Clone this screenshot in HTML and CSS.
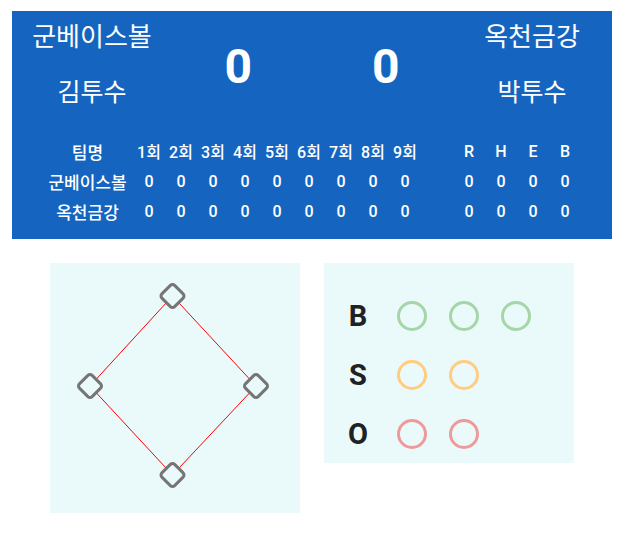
FILE: index.html
```html
<!DOCTYPE html>
<html>
<head>
  <title>Scoreboard</title>
  <link rel="stylesheet" href="styles.css">
</head>
<body>

  <!-- Scoreboard -->
  <div class="board">
    <div class="top">
      <div class="team">
        <div class="team-name">군베이스볼</div>
        <div class="pitcher">김투수</div>
      </div>
      <div class="scores">
        <span>0</span>
        <span>0</span>
      </div>
      <div class="team">
        <div class="team-name">옥천금강</div>
        <div class="pitcher">박투수</div>
      </div>
    </div>

    <table class="linescore">
      <tr class="head">
        <td class="tname">팀명</td>
        <td>1회</td><td>2회</td><td>3회</td><td>4회</td><td>5회</td><td>6회</td><td>7회</td><td>8회</td><td>9회</td>
        <td></td>
        <td>R</td><td>H</td><td>E</td><td>B</td>
      </tr>
      <tr>
        <td class="tname">군베이스볼</td>
        <td>0</td><td>0</td><td>0</td><td>0</td><td>0</td><td>0</td><td>0</td><td>0</td><td>0</td>
        <td></td>
        <td>0</td><td>0</td><td>0</td><td>0</td>
      </tr>
      <tr>
        <td class="tname">옥천금강</td>
        <td>0</td><td>0</td><td>0</td><td>0</td><td>0</td><td>0</td><td>0</td><td>0</td><td>0</td>
        <td></td>
        <td>0</td><td>0</td><td>0</td><td>0</td>
      </tr>
    </table>
  </div>

  <!-- Field + count -->
  <div class="field">
    <div class="panel diamond">
      <svg width="250" height="250" viewBox="0 0 250 250">
        <polygon points="122.5,33 206,123 122.5,212 40,123" fill="none" stroke="#ff0000" stroke-width="1"/>
        <rect class="base" x="113.5" y="24" width="18" height="18" rx="3" transform="rotate(45 122.5 33)"/>
        <rect class="base" x="31" y="114" width="18" height="18" rx="3" transform="rotate(45 40 123)"/>
        <rect class="base" x="197" y="114" width="18" height="18" rx="3" transform="rotate(45 206 123)"/>
        <rect class="base" x="113.5" y="203" width="18" height="18" rx="3" transform="rotate(45 122.5 212)"/>
      </svg>
    </div>

    <div class="panel count">
      <div class="count-row">
        <span class="letter">B</span>
        <span class="dot ball"></span>
        <span class="dot ball"></span>
        <span class="dot ball"></span>
      </div>
      <div class="count-row">
        <span class="letter">S</span>
        <span class="dot strike"></span>
        <span class="dot strike"></span>
      </div>
      <div class="count-row">
        <span class="letter">O</span>
        <span class="dot out"></span>
        <span class="dot out"></span>
      </div>
    </div>
  </div>

</body>
</html>
```

FILE: styles.css
```css
body {
  margin: 0;
  font-family: Roboto, "Noto Sans CJK KR", sans-serif;
  background: white;
}
.board {
  width: 600px;
  margin: 11px 0 0 12px;
  padding: 10px 0 13px;
  box-sizing: border-box;
  background-color: #1565c0;
  color: white;
}
.top {
  display: flex;
  align-items: center;
}
.team {
  width: 160px;
  text-align: center;
  font-weight: 400;
}
.team-name, .pitcher {
  line-height: 32px;
}
.team-name {
  font-size: 26px;
}
.pitcher {
  margin-top: 24px;
  font-size: 25px;
}
.scores {
  flex: 1;
  display: flex;
  justify-content: center;
  gap: 120px;
  padding-top: 4px;
  font-size: 48px;
  font-weight: 700;
  line-height: 1;
}
.linescore {
  margin: 27px 0 0 30px;
  border-collapse: collapse;
  font-size: 16px;
  font-weight: 500;
}
.linescore td {
  width: 32px;
  height: 30px;
  padding: 0;
  text-align: center;
}
.linescore td.tname {
  width: 91px;
  font-size: 17px;
}
.field {
  display: flex;
  gap: 24px;
  margin: 24px 0 0 50px;
  align-items: flex-start;
}
.panel {
  width: 250px;
  background-color: #eaf9f9;
}
.diamond {
  height: 250px;
}
.diamond svg {
  display: block;
}
.base {
  fill: #eaf9f9;
  stroke: #757575;
  stroke-width: 3;
}
.count {
  height: 200px;
  box-sizing: border-box;
  padding: 38px 0 0 24px;
  display: flex;
  flex-direction: column;
  gap: 29px;
}
.count-row {
  display: flex;
  align-items: center;
  height: 30px;
}
.letter {
  width: 20px;
  margin-right: 29px;
  text-align: center;
  font-size: 29px;
  font-weight: 700;
  color: #212121;
}
.dot {
  width: 30px;
  height: 30px;
  box-sizing: border-box;
  border: 3px solid;
  border-radius: 50%;
  margin-right: 22px;
}
.ball { border-color: #a5d6a7; }
.strike { border-color: #ffcc80; }
.out { border-color: #ef9a9a; }
```
